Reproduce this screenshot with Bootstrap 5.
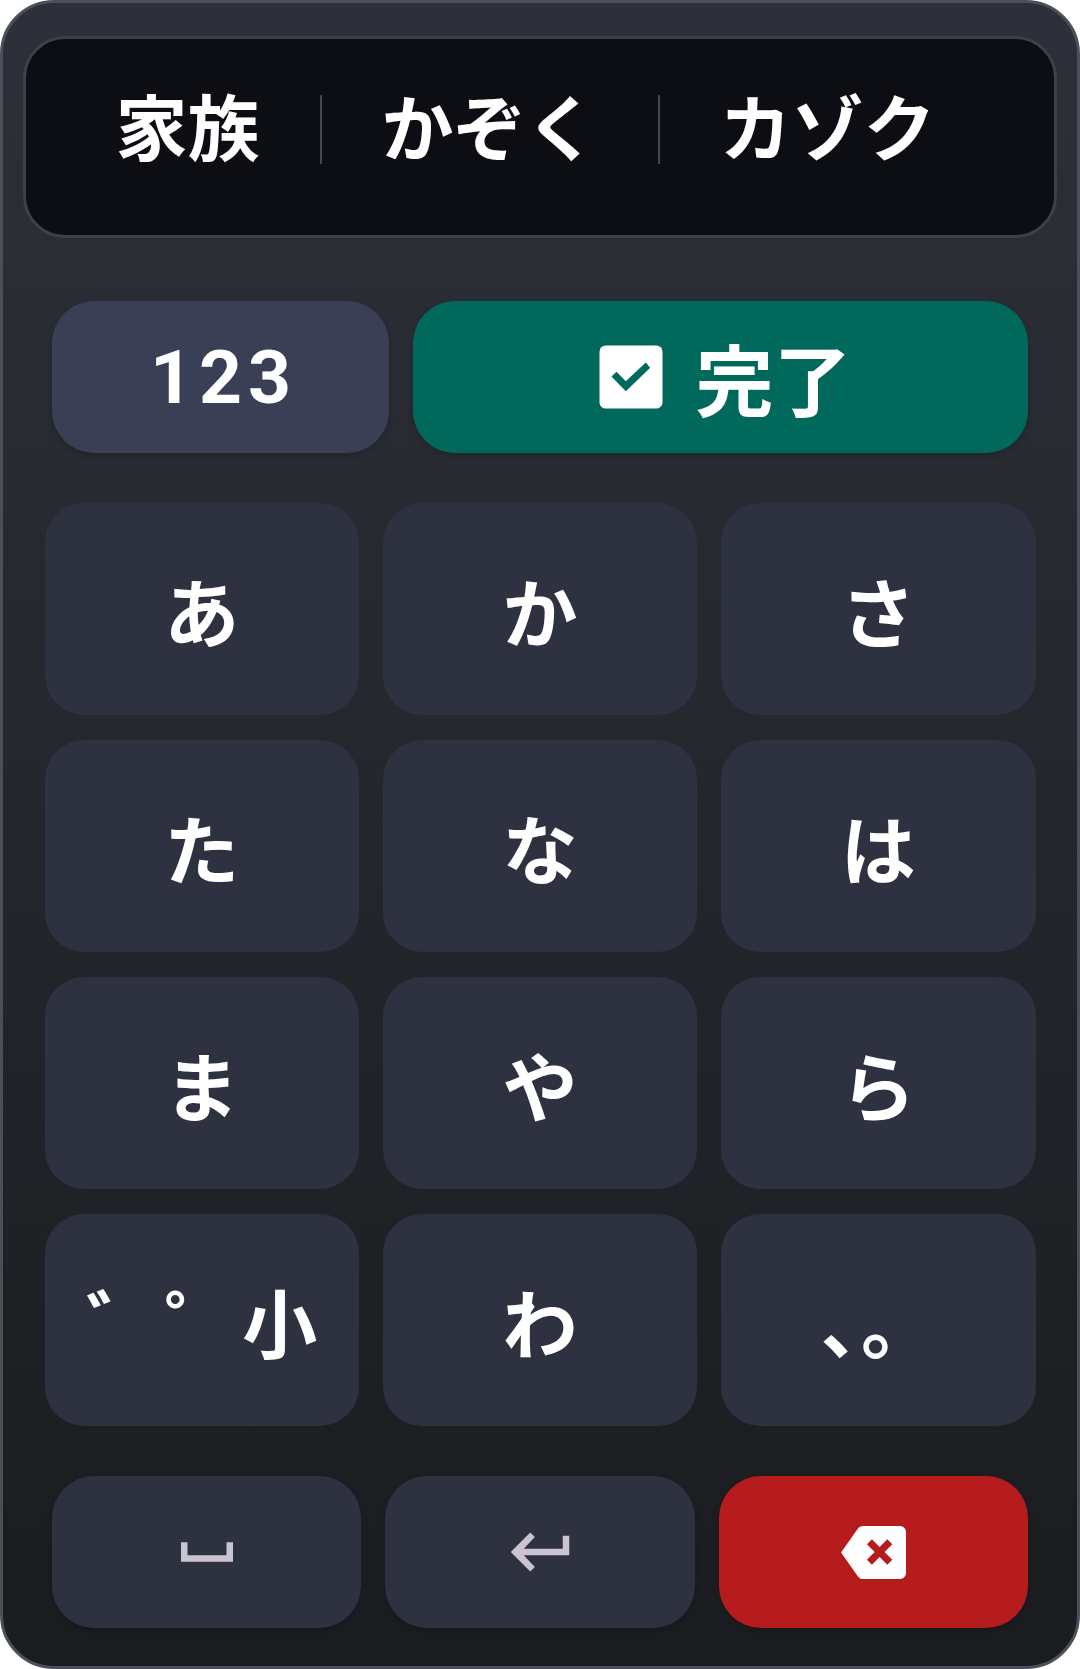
<!DOCTYPE html>
<html lang="ja">
<head>
<meta charset="utf-8">
<title>Kana keyboard</title>
<link href="https://cdn.jsdelivr.net/npm/bootstrap@5.3.0/dist/css/bootstrap.min.css" rel="stylesheet">
<style>
html,body{height:100%;margin:0;background:#fff;}
body{font-family:Roboto,"Noto Sans CJK JP",sans-serif;}
.kb-panel{width:1080px;height:1669px;border:3px solid #4b4f5a;border-radius:54px;background:linear-gradient(180deg,#2d3038 0%,#1a1c1f 100%);padding:33px 20px 0;overflow:hidden;}
.kb-cands{height:202px;background:#0d0e13;border:3px solid #3d4048;border-radius:42px;padding:0 0 13px 29.5px;}
.kb-cand{font-size:72px;font-weight:700;color:#fff;line-height:1;padding:0 60px;white-space:nowrap;}
.kb-sep{width:2px;height:69px;background:#44474e;flex:none;margin-top:-3px;}
.kb-actions{margin:63px 29px 0;gap:24px;}
.kb-btn{border:0;border-radius:42px;color:#fff;height:152px;box-shadow:0 3px 6px rgba(0,0,0,.15);padding:0;font-weight:700;line-height:1;}
.kb-btn:hover,.kb-btn:active{color:#fff;}
.kb-num{width:337px;flex:none;background:#3a3f55!important;font-size:75px;letter-spacing:6px;padding:0 0 0 6px;}
.kb-done{flex:1;background:#00695c!important;font-size:78px;gap:22px;}
.kb-done svg{width:84px;height:84px;}
.kb-done span{padding-top:16px;}
.kb-grid{display:grid;grid-template-columns:repeat(3,1fr);gap:25px 24px;margin:50px 21.5px 0;}
.kb-key{height:212px;border:0;border-radius:39px;background:#2e3140!important;color:#fff;font-size:75px;letter-spacing:3px;font-weight:700;line-height:1;padding:14px 0 0 3px;}
.kb-key:hover,.kb-key:active{color:#fff;}
.kb-bottom{display:grid;grid-template-columns:repeat(3,1fr);gap:24px;margin:50px 29px 0;}
.kb-tool{background:#2e3140!important;}
.kb-del{background:#b71c1c!important;}
.kb-tool svg{width:78px;height:78px;fill:#cac4d0;}
.kb-del svg{width:65px;height:53px;}
</style>
</head>
<body>
<div class="kb-panel">
  <div class="kb-cands d-flex align-items-center">
    <span class="kb-cand">家族</span><span class="kb-sep"></span>
    <span class="kb-cand">かぞく</span><span class="kb-sep"></span>
    <span class="kb-cand">カゾク</span>
  </div>
  <div class="kb-actions d-flex">
    <button type="button" class="btn kb-btn kb-num">123</button>
    <button type="button" class="btn kb-btn kb-done d-flex align-items-center justify-content-center">
      <svg viewBox="0 0 24 24"><rect x="3" y="3" width="18" height="18" rx="1.8" fill="#fff"/><polygon points="6.43,11.86 7.86,10.52 10.52,13.2 16.23,7.86 17.48,9.38 10.52,16.06" fill="#00695c"/></svg>
      <span>完了</span>
    </button>
  </div>
  <div class="kb-grid">
    <button type="button" class="btn kb-key">あ</button>
    <button type="button" class="btn kb-key">か</button>
    <button type="button" class="btn kb-key">さ</button>
    <button type="button" class="btn kb-key">た</button>
    <button type="button" class="btn kb-key">な</button>
    <button type="button" class="btn kb-key">は</button>
    <button type="button" class="btn kb-key">ま</button>
    <button type="button" class="btn kb-key">や</button>
    <button type="button" class="btn kb-key">ら</button>
    <button type="button" class="btn kb-key">゛゜小</button>
    <button type="button" class="btn kb-key">わ</button>
    <button type="button" class="btn kb-key">、。</button>
  </div>
  <div class="kb-bottom">
    <button type="button" class="btn kb-btn kb-tool d-flex align-items-center justify-content-center">
      <svg viewBox="0 0 24 24"><path d="M18 9v4H6V9H4v6h16V9z"/></svg>
    </button>
    <button type="button" class="btn kb-btn kb-tool d-flex align-items-center justify-content-center">
      <svg viewBox="0 0 24 24"><path d="M19 7v4H7l3.4-3.6L9 6l-6 6 6 6 1.4-1.4L7 13H21V7z"/></svg>
    </button>
    <button type="button" class="btn kb-btn kb-del d-flex align-items-center justify-content-center">
      <svg viewBox="0 0 65 53"><path d="M22 0H59a6 6 0 0 1 6 6V47a6 6 0 0 1-6 6H22c-2.200 0-3.800-1-5-2.600L0 26.500 17 2.600C18.200 1 19.800 0 22 0z" fill="#fff"/><path d="M28.400 15.800L48.800 36.200M48.800 15.800L28.400 36.200" stroke="#b71c1c" stroke-width="7" fill="none"/></svg>
    </button>
  </div>
</div>
<script src="https://cdn.jsdelivr.net/npm/bootstrap@5.3.0/dist/js/bootstrap.bundle.min.js"></script>
</body>
</html>
